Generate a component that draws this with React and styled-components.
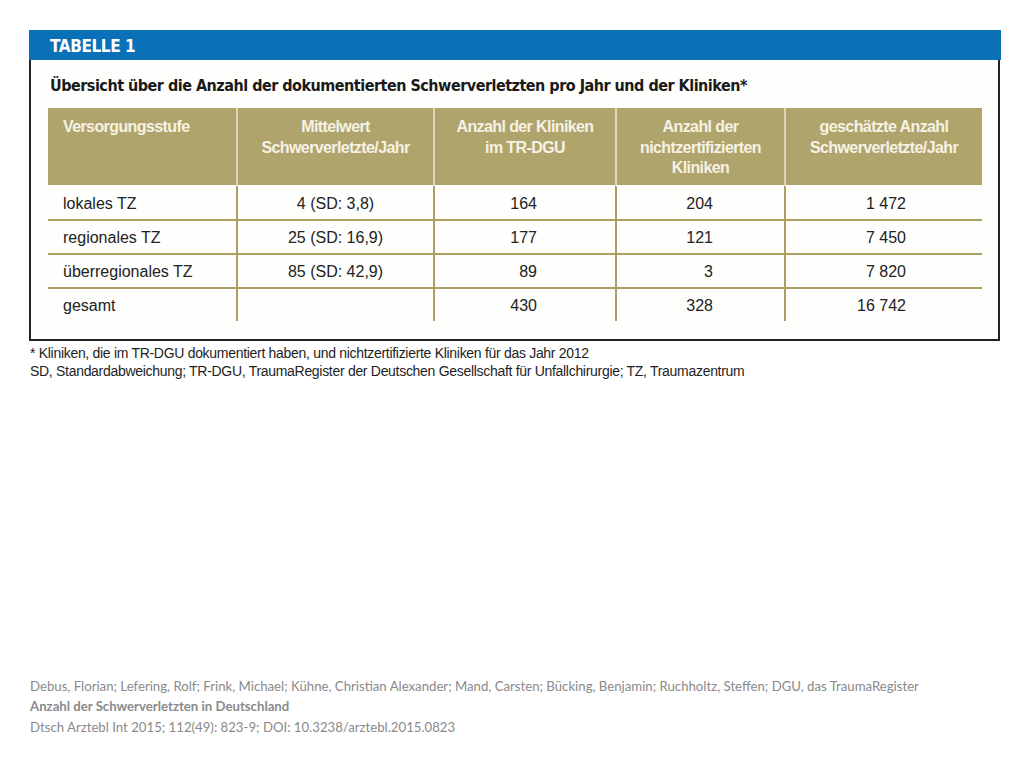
import React from 'react';
import styled, { createGlobalStyle } from 'styled-components';

const GlobalStyle = createGlobalStyle`
  html, body {
    margin: 0;
    padding: 0;
    background: #ffffff;
  }
`;

const condensed = `"DejaVu Sans Condensed", "Liberation Sans", Arial, sans-serif`;
const arial = `"Liberation Sans", Arial, sans-serif`;

const Page = styled.div`
  width: 1024px;
  height: 768px;
  box-sizing: border-box;
  padding: 30px 0 0 29px;
  display: flex;
  flex-direction: column;
`;

const Figure = styled.div`
  width: 972px;
  display: flex;
  flex-direction: column;
`;

const BlueBar = styled.div`
  height: 30px;
  background: #0a71b8;
  color: #ffffff;
  font-family: ${condensed};
  font-weight: bold;
  font-size: 17px;
  letter-spacing: -0.4px;
  display: flex;
  align-items: center;
  padding-left: 21px;
  padding-top: 1px;
  box-sizing: border-box;
`;

const Box = styled.div`
  width: 971px;
  box-sizing: border-box;
  border: 2px solid #222222;
  border-top: none;
  background: #fefefc;
  padding: 16px 16px 18px 17px;
`;

const Title = styled.div`
  font-family: ${condensed};
  font-weight: bold;
  font-size: 16px;
  letter-spacing: -0.5px;
  color: #1a1a1a;
  padding-left: 2px;
  height: 20px;
  line-height: 20px;
  margin-bottom: 12px;
`;

const Table = styled.div`
  display: grid;
  grid-template-columns: 188px 197px 182px 169px 198px;
  width: 934px;
  font-family: ${arial};
`;

const HeadCell = styled.div`
  background: #b0a46d;
  color: #f6f2e4;
  font-weight: bold;
  font-size: 16px;
  letter-spacing: -0.6px;
  line-height: 20.5px;
  height: 77px;
  box-sizing: border-box;
  padding: 9px ${p => (p.$first ? '8px' : '2px')} 0 ${p => (p.$first ? '15px' : '2px')};
  text-align: ${p => (p.$first ? 'left' : 'center')};
  border-left: ${p => (p.$first ? 'none' : '2px solid #ddd6b8')};
`;

const Cell = styled.div`
  height: 34px;
  box-sizing: border-box;
  font-size: 16px;
  color: #222222;
  display: flex;
  align-items: center;
  padding-top: 2px;
  justify-content: ${p => p.$align === 'left' ? 'flex-start' : p.$align === 'right' ? 'flex-end' : 'center'};
  padding-left: ${p => (p.$align === 'left' ? '15px' : '0')};
  padding-right: ${p => (p.$pr ? `${p.$pr}px` : '0')};
  border-left: ${p => (p.$first ? 'none' : '2px solid #aa9e62')};
  border-top: 2px solid ${p => (p.$top ? '#aa9e62' : 'transparent')};
`;

const Notes = styled.div`
  font-family: ${arial};
  font-size: 14px;
  line-height: 18px;
  color: #1e1e1e;
  padding: 3px 0 0 1px;
  letter-spacing: -0.3px;
`;

const Citation = styled.div`
  margin-top: auto;
  margin-bottom: 31px;
  padding-left: 1px;
  font-family: Lato, "Open Sans", sans-serif;
  font-size: 13.2px;
  line-height: 20.5px;
  color: #8a8a8a;
`;

const CitTitle = styled.div`
  font-weight: bold;
`;

const headers = [
  'Versorgungsstufe',
  <>Mittelwert<br />Schwerverletzte/Jahr</>,
  <>Anzahl der Kliniken<br />im TR-DGU</>,
  <>Anzahl der<br />nichtzertifizierten<br />Kliniken</>,
  <>geschätzte Anzahl<br />Schwerverletzte/Jahr</>,
];

const rows = [
  ['lokales TZ', '4 (SD: 3,8)', '164', '204', '1 472'],
  ['regionales TZ', '25 (SD: 16,9)', '177', '121', '7 450'],
  ['überregionales TZ', '85 (SD: 42,9)', '89', '3', '7 820'],
  ['gesamt', '', '430', '328', '16 742'],
];

// spalten 3-5: zahlen rechtsbündig in zentriertem block
const align = ['left', 'center', 'right', 'right', 'right'];
const padRight = [0, 0, 78, 71, 76];

const App = () => (
  <>
    <GlobalStyle />
    <Page>
      <Figure>
        <BlueBar>TABELLE 1</BlueBar>
        <Box>
          <Title>Übersicht über die Anzahl der dokumentierten Schwerverletzten pro Jahr und der Kliniken*</Title>
          <Table>
            {headers.map((h, i) => (
              <HeadCell key={i} $first={i === 0}>{h}</HeadCell>
            ))}
            {rows.map((row, r) =>
              row.map((val, c) => (
                <Cell
                  key={`${r}-${c}`}
                  $first={c === 0}
                  $top={r > 0}
                  $align={align[c]}
                  $pr={padRight[c]}
                >
                  {val}
                </Cell>
              ))
            )}
          </Table>
        </Box>
        <Notes>
          * Kliniken, die im TR-DGU dokumentiert haben, und nichtzertifizierte Kliniken für das Jahr 2012<br />
          SD, Standardabweichung; TR-DGU, TraumaRegister der Deutschen Gesellschaft für Unfallchirurgie; TZ, Traumazentrum
        </Notes>
      </Figure>
      <Citation>
        Debus, Florian; Lefering, Rolf; Frink, Michael; Kühne, Christian Alexander; Mand, Carsten; Bücking, Benjamin; Ruchholtz, Steffen; DGU, das TraumaRegister
        <CitTitle>Anzahl der Schwerverletzten in Deutschland</CitTitle>
        Dtsch Arztebl Int 2015; 112(49): 823-9; DOI: 10.3238/arztebl.2015.0823
      </Citation>
    </Page>
  </>
);

export default App;
